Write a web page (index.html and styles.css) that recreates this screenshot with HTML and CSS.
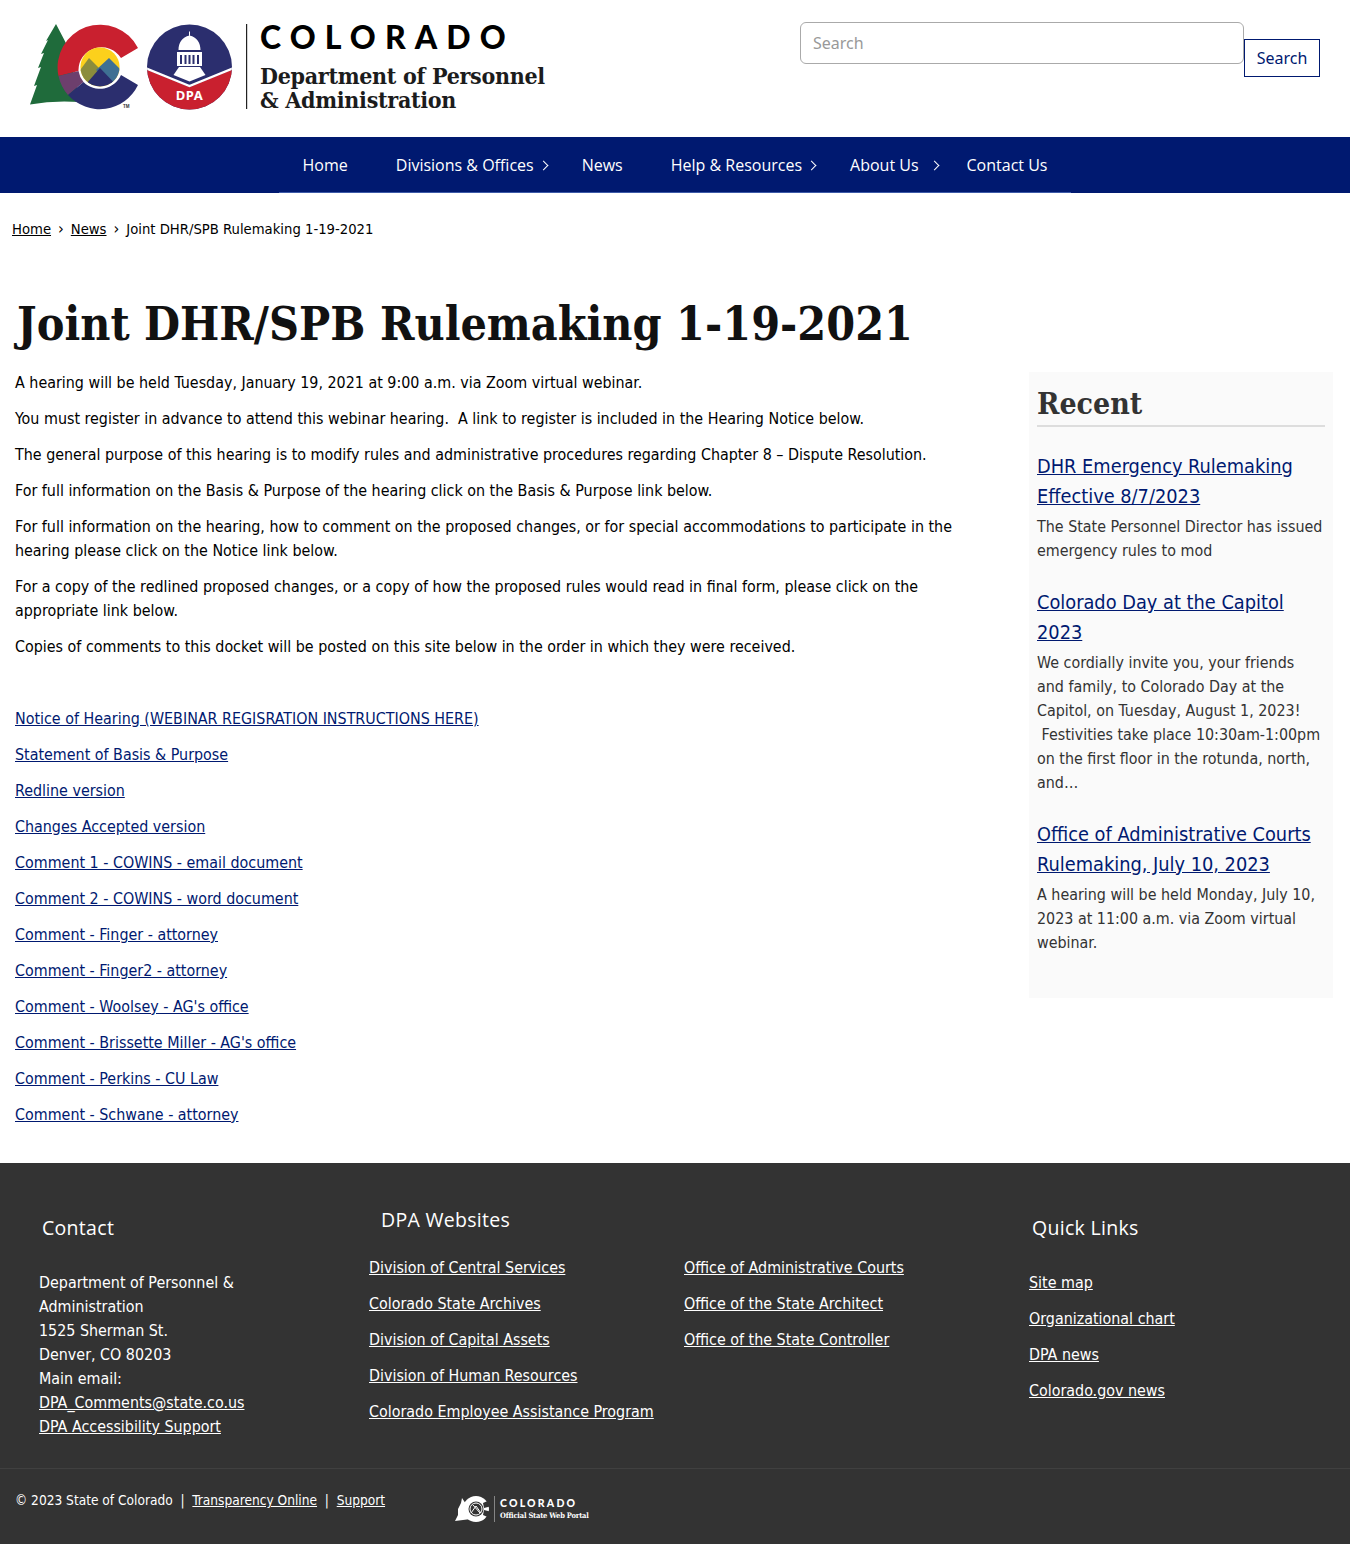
FILE: index.html
```html
<!DOCTYPE html>
<html lang="en">
<head>
<meta charset="utf-8">
<title>Joint DHR/SPB Rulemaking 1-19-2021</title>
<link rel="stylesheet" href="styles.css">
</head>
<body>
<header class="site-header">
  <a class="logo" href="#">
    <svg class="logo-mark" viewBox="0 0 230 100" width="230" height="100" aria-hidden="true">
      <defs>
        <clipPath id="sky"><circle cx="80" cy="52" r="19.6"/></clipPath>
        <clipPath id="disc"><circle cx="169.5" cy="52" r="42.5"/></clipPath>
      </defs>
      <path d="M36 9 L48 32 L60 87 Q34 85 10 89.500 L17 70 L14 71 L21 52 L18 53 L24 38 L21 39 L28 25 L26 26 Z" fill="#1f6b3b"/>
      <path d="M118 33 A42.500 42.500 0 0 0 38.500 61 L58.500 56 A23 23 0 0 1 101 43 Z" fill="#c9202f"/>
      <path d="M38.500 61 A42.500 42.500 0 0 0 48 80 L63.500 67 A23 23 0 0 1 58.500 56 Z" fill="#6d3f6d"/>
      <path d="M48 80 A42.500 42.500 0 0 0 118 70 L101 60 A23 23 0 0 1 63.500 67 Z" fill="#2b2e6e"/>
      <g clip-path="url(#sky)">
        <rect x="55" y="30" width="50" height="50" fill="#fcd01c"/>
        <path d="M55 62 L69 43 L83 57 L68 76 Z" fill="#8b8c3d"/>
        <path d="M76 55 L89 43 L106 60 L96 72 Z" fill="#3f7093"/>
        <path d="M60 76 L80 53 L102 76 L80 84 Z" fill="#2b2e6e"/>
      </g>
      <text class="tm" x="103" y="93">TM</text>
      <circle cx="169.500" cy="52" r="42.500" fill="#2b2e6e"/>
      <g clip-path="url(#disc)">
        <path d="M125 54 L169.500 72 L214 54 V96 H125 Z" fill="#c9202f"/>
        <path d="M125 53 L169.500 71 L214 53" fill="none" stroke="#fff" stroke-width="2.400"/>
      </g>
      <path d="M169 16.500 h1 v4 h-1z M169.500 20.500 C162 22 158.500 28 158.500 35 H180.500 C180.500 28 177 22 169.500 20.500 Z M157 37 H182 V51 H157 Z M159 52 H180 L185.500 60 L169.500 66.500 L153.500 60 Z" fill="#fff"/>
      <path d="M160 40 h2 v9 h-2z M164.500 40 h2 v9 h-2z M168.500 40 h2 v9 h-2z M172.500 40 h2 v9 h-2z M177 40 h2 v9 h-2z" fill="#2b2e6e"/>
      <text class="dpa" x="169.500" y="85">DPA</text>
      <rect x="226" y="9" width="1.200" height="85" fill="#222"/>
    </svg>
    <span class="logo-text">
      <span class="logo-state">COLORADO</span>
      <span class="logo-dept">Department of Personnel<br>&amp; Administration</span>
    </span>
  </a>
  <form class="search">
    <input class="search-input" type="text" placeholder="Search">
    <button class="search-btn" type="button">Search</button>
  </form>
</header>

<nav class="main-nav">
  <ul class="nav-list">
    <li class="nav-item"><a href="#">Home</a></li>
    <li class="nav-item has-sub"><a href="#">Divisions &amp; Offices</a></li>
    <li class="nav-item"><a href="#">News</a></li>
    <li class="nav-item has-sub"><a href="#">Help &amp; Resources</a></li>
    <li class="nav-item has-sub far"><a href="#">About Us</a></li>
    <li class="nav-item"><a href="#">Contact Us</a></li>
  </ul>
</nav>

<ol class="crumbs">
  <li><a href="#">Home</a></li>
  <li class="sep">›</li>
  <li><a href="#">News</a></li>
  <li class="sep">›</li>
  <li>Joint DHR/SPB Rulemaking 1-19-2021</li>
</ol>

<h1 class="page-title">Joint DHR/SPB Rulemaking 1-19-2021</h1>

<div class="content">
  <main class="article">
    <p>A hearing will be held Tuesday, January 19, 2021 at 9:00 a.m. via Zoom virtual webinar.</p>
    <p>You must register in advance to attend this webinar hearing.&nbsp; A link to register is included in the Hearing Notice below.</p>
    <p>The general purpose of this hearing is to modify rules and administrative procedures regarding Chapter 8 – Dispute Resolution.</p>
    <p>For full information on the Basis &amp; Purpose of the hearing click on the Basis &amp; Purpose link below.</p>
    <p>For full information on the hearing, how to comment on the proposed changes, or for special accommodations to participate in the hearing please click on the Notice link below.</p>
    <p>For a copy of the redlined proposed changes, or a copy of how the proposed rules would read in final form, please click on the appropriate link below.</p>
    <p>Copies of comments to this docket will be posted on this site below in the order in which they were received.</p>
    <p>&nbsp;</p>
    <p><a href="#">Notice of Hearing (WEBINAR REGISRATION INSTRUCTIONS HERE)</a></p>
    <p><a href="#">Statement of Basis &amp; Purpose</a></p>
    <p><a href="#">Redline version</a></p>
    <p><a href="#">Changes Accepted version</a></p>
    <p><a href="#">Comment 1 - COWINS - email document</a></p>
    <p><a href="#">Comment 2 - COWINS - word document</a></p>
    <p><a href="#">Comment - Finger - attorney</a></p>
    <p><a href="#">Comment - Finger2 - attorney</a></p>
    <p><a href="#">Comment - Woolsey - AG's office</a></p>
    <p><a href="#">Comment - Brissette Miller - AG's office</a></p>
    <p><a href="#">Comment - Perkins - CU Law</a></p>
    <p><a href="#">Comment - Schwane - attorney</a></p>
  </main>
  <aside class="recent">
    <h2 class="recent-title">Recent</h2>
    <article class="recent-item">
      <h3><a href="#">DHR Emergency Rulemaking Effective 8/7/2023</a></h3>
      <p>The State Personnel Director has issued emergency rules to mod</p>
    </article>
    <article class="recent-item">
      <h3><a href="#">Colorado Day at the Capitol 2023</a></h3>
      <p>We cordially invite you, your friends and family, to Colorado Day at the Capitol, on Tuesday, August 1, 2023! &nbsp;Festivities take place 10:30am-1:00pm on the first floor in the rotunda, north, and…</p>
    </article>
    <article class="recent-item">
      <h3><a href="#">Office of Administrative Courts Rulemaking, July 10, 2023</a></h3>
      <p>A hearing will be held Monday, July 10, 2023 at 11:00 a.m. via Zoom virtual webinar.</p>
    </article>
  </aside>
</div>

<footer class="site-footer">
  <div class="footer-cols">
    <section class="f-contact">
      <h2 class="f-head">Contact</h2>
      <p>Department of Personnel &amp; Administration<br>1525 Sherman St.<br>Denver, CO 80203<br>Main email:<br><a href="#">DPA_Comments@state.co.us</a><br><a href="#">DPA Accessibility Support</a></p>
    </section>
    <section class="f-sites">
      <h2 class="f-head">DPA Websites</h2>
      <div class="f-sites-cols">
        <ul>
          <li><a href="#">Division of Central Services</a></li>
          <li><a href="#">Colorado State Archives</a></li>
          <li><a href="#">Division of Capital Assets</a></li>
          <li><a href="#">Division of Human Resources</a></li>
          <li><a href="#">Colorado Employee Assistance Program</a></li>
        </ul>
        <ul>
          <li><a href="#">Office of Administrative Courts</a></li>
          <li><a href="#">Office of the State Architect</a></li>
          <li><a href="#">Office of the State Controller</a></li>
        </ul>
      </div>
    </section>
    <section class="f-quick">
      <h2 class="f-head">Quick Links</h2>
      <ul>
        <li><a href="#">Site map</a></li>
        <li><a href="#">Organizational chart</a></li>
        <li><a href="#">DPA news</a></li>
        <li><a href="#">Colorado.gov news</a></li>
      </ul>
    </section>
  </div>
  <div class="footer-bottom">
    <p class="legal">© 2023 State of Colorado &nbsp;|&nbsp; <a href="#">Transparency Online</a> &nbsp;|&nbsp; <a href="#">Support</a></p>
    <a class="portal" href="#">
      <svg viewBox="0 0 40 28" width="40" height="28" aria-hidden="true">
        <path d="M7 3 L11 9 L16 24 L0 26 L3 20 L3 14 L6 8 Z" fill="#fff"/>
        <circle cx="21" cy="14" r="13" fill="#fff"/>
        <circle cx="21" cy="14" r="7.500" fill="#333"/>
        <path d="M28 8 L37 4 V11 L29 13 Z M29 15 L37 17 V24 L28 20 Z" fill="#333"/>
        <circle cx="21" cy="14" r="6" fill="none" stroke="#fff" stroke-width="1"/>
        <path d="M16 18 L21 11 L26 18 M18 10 L25 18" fill="none" stroke="#fff" stroke-width="1"/>
        <rect x="39.300" y="1" width=".7" height="26" fill="#aaa"/>
      </svg>
      <span class="portal-text">
        <span class="portal-state">COLORADO</span>
        <span class="portal-sub">Official State Web Portal</span>
      </span>
    </a>
  </div>
</footer>
</body>
</html>
```
FILE: styles.css
```css
* { box-sizing: border-box; }
html, body { margin: 0; padding: 0; }
body {
  font-family: "DejaVu Sans", sans-serif;
  font-stretch: condensed;
  font-size: 15.900px;
  line-height: 24px;
  color: #000;
  background: #fff;
}
a { color: #001970; }
ul, ol { list-style: none; margin: 0; padding: 0; }

.site-header {
  height: 137px;
  display: flex;
  align-items: flex-start;
  padding: 15px 30px 0 20px;
}
.logo { display: flex; color: #000; text-decoration: none; }
.logo-mark { display: block; flex: none; }
.tm { font: 700 4.500px "Liberation Sans", sans-serif; fill: #333; }
.dpa { font: 700 13px "Noto Sans", sans-serif; fill: #fff; text-anchor: middle; letter-spacing: .6px; }
.logo-text { display: flex; flex-direction: column; margin-left: 10px; }
.logo-state {
  font: 900 32px/42px "Lato", sans-serif;
  letter-spacing: 9.100px;
  margin-top: 1px;
}
.logo-dept {
  font: 700 23px/24px "DejaVu Serif", serif;
  font-stretch: condensed;
  letter-spacing: -.3px;
  color: #1c1c1c;
  margin-top: 6px;
}

.search { display: flex; align-items: flex-start; margin-left: auto; margin-top: 7px; }
.search-input {
  width: 444px;
  height: 42px;
  border: 1px solid #aaa;
  border-radius: 6px;
  padding: 0 12px;
  font: 16px "Noto Sans", sans-serif;
  background: #fff;
}
.search-input::placeholder { color: #999; }
.search-btn {
  width: 76px;
  height: 38px;
  margin-top: 17px;
  padding: 0;
  border: 1px solid #001970;
  background: #fff;
  color: #001970;
  font: 16px "Noto Sans", sans-serif;
}

.main-nav { height: 56px; background: #001970; display: flex; justify-content: center; }
.nav-list { display: flex; height: 56px; border-bottom: 1px solid #3d5aa8; }
.nav-item { position: relative; padding: 0 24px; line-height: 56px; font-size: 16px; font-stretch: normal; font-family: "Open Sans", sans-serif; }
.nav-item a { color: #fff; text-decoration: none; }
.has-sub::after {
  content: "";
  position: absolute;
  right: 11px;
  top: 25px;
  width: 6px;
  height: 6px;
  border-top: 1.600px solid #fff;
  border-right: 1.600px solid #fff;
  transform: rotate(45deg);
}
.far::after { right: 5px; }

.crumbs { display: flex; gap: 7px; padding: 24px 0 0 12px; font-size: 14.700px; line-height: 24px; }
.crumbs a { color: #000; }
.sep { font-size: 16px; }

.page-title {
  margin: 53px 0 0;
  padding-left: 17px;
  font: 700 46.200px/60px "DejaVu Serif", serif;
  font-stretch: condensed;
  color: #111;
}

.content { display: flex; align-items: flex-start; margin-top: 16px; padding: 0 17px 0 15px; }
.article { width: 972px; padding-top: 1px; }
.article p { margin: 0 0 12px; }

.recent {
  width: 304px;
  height: 626px;
  margin: 2px 0 0 42px;
  padding: 14px 8px 0;
  background: #fafafa;
  color: #333;
}
.recent-title {
  margin: 0 0 25px;
  padding-bottom: 3px;
  border-bottom: 2px solid #ddd;
  font: 700 30px/36px "DejaVu Serif", serif;
  font-stretch: condensed;
  color: #333;
}
.recent-item { margin-bottom: 25px; }
.recent-item h3 { margin: 0; font-weight: 400; font-size: 19.800px; line-height: 30px; }
.recent-item p { margin: 3px 0 0; }

.site-footer { margin-top: 24px; height: 381px; background: #333; color: #fff; }
.site-footer a { color: #fff; }
.footer-cols { display: flex; height: 306px; padding: 45px 0 0 39px; border-bottom: 1px solid #404040; }
.f-head { margin: 0 0 23px 3px; font: 400 19.500px/40px "Open Sans", sans-serif; letter-spacing: .3px; }
.f-contact { width: 330px; }
.f-contact p { margin: 0; width: 220px; }
.f-sites { width: 660px; margin-top: -8px; }
.f-sites .f-head { margin: 0 0 16px 12px; }
.f-sites-cols { display: flex; }
.f-sites-cols ul { width: 315px; }
.f-sites li, .f-quick li { margin-bottom: 12px; }

.footer-bottom { display: flex; align-items: flex-start; padding: 19px 0 0 15px; font-size: 13.600px; line-height: 24px; }
.legal { margin: 0; width: 440px; }
.portal { display: flex; align-items: center; margin-top: 7px; text-decoration: none; }
.portal-text { display: flex; flex-direction: column; margin-left: 5px; }
.portal-state { font: 900 10.500px/13px "Lato", sans-serif; letter-spacing: 2.200px; }
.portal-sub { font: 700 7.500px/11px "DejaVu Serif", serif; font-stretch: condensed; letter-spacing: -.2px; }
```
